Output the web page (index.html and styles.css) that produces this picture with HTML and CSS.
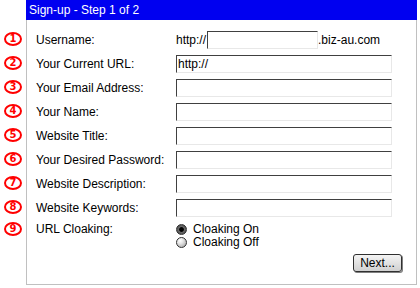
FILE: index.html
```html
<!DOCTYPE html>
<html lang="en">
<head>
    <meta charset="UTF-8">
    <title>Sign-up - Step 1 of 2</title>
    <link rel="stylesheet" href="styles.css">
</head>
<body>
    <div class="panel">
        <div class="title">Sign-up - Step 1 of 2</div>
        <form class="form">
            <div class="row">
                <span class="num">1</span>
                <label>Username:</label>
                <div class="field">http://<input type="text" class="short">.biz-au.com</div>
            </div>
            <div class="row">
                <span class="num">2</span>
                <label>Your Current URL:</label>
                <div class="field"><input type="text" value="http://"></div>
            </div>
            <div class="row">
                <span class="num">3</span>
                <label>Your Email Address:</label>
                <div class="field"><input type="text"></div>
            </div>
            <div class="row">
                <span class="num">4</span>
                <label>Your Name:</label>
                <div class="field"><input type="text"></div>
            </div>
            <div class="row">
                <span class="num">5</span>
                <label>Website Title:</label>
                <div class="field"><input type="text"></div>
            </div>
            <div class="row">
                <span class="num">6</span>
                <label>Your Desired Password:</label>
                <div class="field"><input type="password"></div>
            </div>
            <div class="row">
                <span class="num">7</span>
                <label>Website Description:</label>
                <div class="field"><input type="text"></div>
            </div>
            <div class="row">
                <span class="num">8</span>
                <label>Website Keywords:</label>
                <div class="field"><input type="text"></div>
            </div>
            <div class="row row-top">
                <span class="num">9</span>
                <label>URL Cloaking:</label>
                <div class="radios">
                    <label class="radio"><input type="radio" name="cloak" checked>Cloaking On</label>
                    <label class="radio"><input type="radio" name="cloak">Cloaking Off</label>
                </div>
            </div>
            <div class="actions">
                <button type="button" class="next-btn">Next...</button>
            </div>
        </form>
    </div>
</body>
</html>
```

FILE: styles.css
```css
body {
    margin: 0;
    background: #fff;
    font-family: 'Liberation Sans', Arial, sans-serif;
    font-size: 12px;
    color: #000;
}
.panel {
    width: 391px;
    margin-left: 26px;
}
.title {
    height: 20px;
    line-height: 20px;
    padding-left: 3px;
    background: #0000f0;
    color: #fff;
}
.form {
    border: 1px solid #c0c0c0;
    border-top: none;
    padding: 8px 0 12px 9px;
}
.row {
    display: flex;
    align-items: center;
    height: 24px;
}
.row-top {
    align-items: flex-start;
    height: auto;
    padding-top: 3px;
}
.row-top label {
    line-height: 13px;
}
.num {
    box-sizing: border-box;
    width: 18px;
    height: 14px;
    margin: 0 14px 3px -32px;
    border: 2px solid #ff0000;
    border-radius: 50%;
    color: #ff0000;
    font-family: 'DejaVu Sans', sans-serif;
    font-weight: bold;
    font-size: 10px;
    line-height: 10px;
    text-align: center;
}
.row-top .num {
    margin-top: -1px;
    margin-bottom: 0;
}
.row > label {
    width: 140px;
}
.field {
    display: flex;
    align-items: center;
}
.field input {
    box-sizing: border-box;
    width: 216px;
    height: 18px;
    margin: 0;
    padding: 0 1px;
    border: 1px solid #e8e8e8;
    border-top-color: #404040;
    border-left-color: #404040;
    font-family: 'Liberation Sans', Arial, sans-serif;
    font-size: 12px;
    outline: none;
}
.field input.short {
    width: 111px;
    margin-left: 1px;
}
.radios {
    display: flex;
    flex-direction: column;
}
.radio {
    display: flex;
    align-items: center;
    height: 13px;
    line-height: 13px;
}
.radio input {
    appearance: none;
    -webkit-appearance: none;
    box-sizing: border-box;
    width: 11px;
    height: 11px;
    margin: 0 6px 0 0;
    border: 1px solid #303030;
    border-radius: 50%;
    background: radial-gradient(circle at 35% 30%, #ffffff 0, #e4e4e4 35%, #9a9a9a 100%);
}
.radio input:checked {
    background: radial-gradient(circle at 50% 50%, #000 0, #000 30%, #6a6a6a 45%, #3a3a3a 100%);
}
.actions {
    display: flex;
    justify-content: flex-end;
    margin-top: 5px;
    padding-right: 14px;
}
.next-btn {
    box-sizing: border-box;
    width: 49px;
    height: 18px;
    padding: 0;
    border: 1px solid #303030;
    border-radius: 3px;
    background: linear-gradient(#f4f4f4, #d0d0d0);
    box-shadow: 1px 1px 0 #808080;
    font-family: 'Liberation Sans', Arial, sans-serif;
    font-size: 12px;
    color: #000;
}
```
